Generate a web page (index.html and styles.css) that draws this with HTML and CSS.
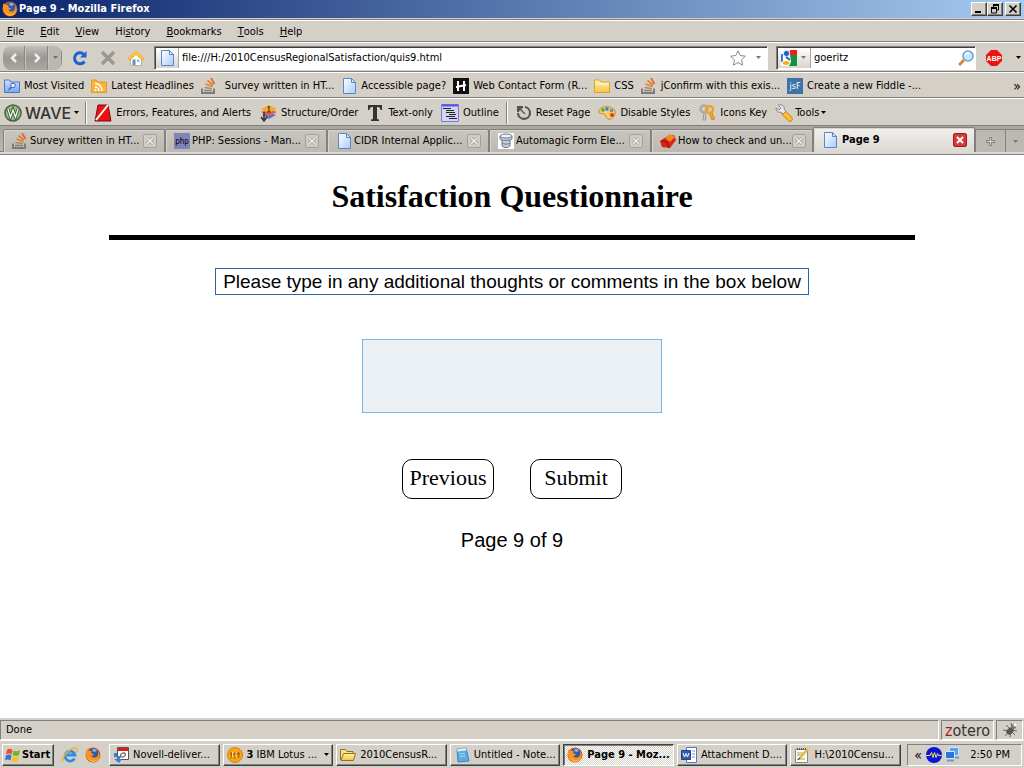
FILE: index.html
```html
<!DOCTYPE html>
<html lang="en">
	<head>
		<meta charset="UTF-8" />
		<meta name="viewport" content="width=device-width, initial-scale=1.0" />
		<title>Page 9 - Mozilla Firefox</title>
		<link rel="stylesheet" href="styles.css">
	</head>

	<body>
		<!-- Shared icons -->
		<svg class="icon-defs" aria-hidden="true">
			<defs>
				<linearGradient id="paper" x1="0" y1="0" x2="1" y2="1">
					<stop offset="0" stop-color="#fff" />
					<stop offset="1" stop-color="#a9cdfa" />
				</linearGradient>
				<linearGradient id="gold" x1="0" y1="0" x2="0" y2="1">
					<stop offset="0" stop-color="#fff3b0" />
					<stop offset="1" stop-color="#f5c540" />
				</linearGradient>
				<linearGradient id="bluefill" x1="0" y1="0" x2="0" y2="1">
					<stop offset="0" stop-color="#cfe0ff" />
					<stop offset="1" stop-color="#7aa5f0" />
				</linearGradient>
				<symbol id="page" viewBox="0 0 16 16">
					<path d="M2.500 .5h8l4 4v11h-12z" fill="url(#paper)" stroke="#5c86c4" />
					<path d="M10.500 .5v4h4z" fill="#dceaff" stroke="#5c86c4" />
				</symbol>
				<symbol id="stack" viewBox="0 0 16 16">
					<path d="M1 10.500v4.500h12v-4.500" fill="none" stroke="#7c7c7c" stroke-width="2" />
					<path d="M3 12.500h8" stroke="#8a8275" stroke-width="1.500" />
					<path d="M3.500 9.500l7.500 1" stroke="#b08a5a" stroke-width="1.500" />
					<path d="M4.500 6l7 2.500" stroke="#d9853a" stroke-width="1.700" />
					<path d="M6.500 2.500l5.500 4.500" stroke="#ee7a28" stroke-width="1.700" />
					<path d="M10 0l3.500 6" stroke="#e2642a" stroke-width="1.700" />
				</symbol>
				<symbol id="folder" viewBox="0 0 16 16">
					<path d="M.5 14.500v-12.500h5l1.500 2h8.500v10.500z" fill="url(#gold)" stroke="#d9a52e" />
					<path d="M1.500 6h13" stroke="#fffbe0" />
				</symbol>
				<symbol id="folder-open" viewBox="0 0 16 16">
					<path d="M.5 13v-10.500h5l1.500 2h6v3" fill="#fbe08a" stroke="#8f7420" />
					<path d="M1 13.500l2.500-7h12l-2 7z" fill="url(#gold)" stroke="#8f7420" />
				</symbol>
				<symbol id="firefox" viewBox="0 0 16 16">
					<circle cx="8" cy="8" r="7.500" fill="#d9541a" />
					<circle cx="8.500" cy="6.500" r="5" fill="#2d5ca8" />
					<path d="M7 2.500c2-1 4-.5 5 1l-2 1.500-2-.5z" fill="#7fb5e8" />
					<path d="M1.500 2.500c1 .3 1.500 1 2.500 1l3 1c-1 1-1 1.500 0 2.200l2 .3c-.5 2-2 1.500-2.500 2 1 2 4.500 2 6 0 1-1.500 1-3 .5-4.500 2.500 3 2 7-1 9-4 2.500-9 1-10.700-3.500C.5 7 .8 4.500 1.500 2.500z" fill="#f7931e" />
					<path d="M3 10c2 4.500 8 5 11 1-1 4-9 6-11-1z" fill="#ffce4a" />
				</symbol>
				<symbol id="tab-x" viewBox="0 0 14 14">
					<rect x=".5" y=".5" width="13" height="13" rx="1.500" fill="#d0cdc8" stroke="#a3a09b" />
					<path d="M4 4l6 6M10 4l-6 6" stroke="#999" stroke-width="3" />
					<path d="M4 4l6 6M10 4l-6 6" stroke="#f3f2f0" stroke-width="1.500" />
				</symbol>
				<symbol id="down" viewBox="0 0 5 3">
					<path d="M0 0h5L2.500 3z" fill="currentColor" />
				</symbol>
			</defs>
		</svg>

		<header class="title-bar">
			<svg class="icon"><use href="#firefox" /></svg>
			<span class="window-title">Page 9 - Mozilla Firefox</span>
			<button class="window-btn" aria-label="Minimize">
				<svg viewBox="0 0 12 10"><path d="M2 8h6" stroke="#000" stroke-width="2" /></svg>
			</button>
			<button class="window-btn" aria-label="Restore">
				<svg viewBox="0 0 12 10"><path d="M4 1h6M4.500 1v3M9.500 1v5h-2M2 4.500h6M2.500 4v5h5v-5" fill="none" stroke="#000" /><path d="M4 1h6M2 4h6" stroke="#000" stroke-width="2" /></svg>
			</button>
			<button class="window-btn window-close" aria-label="Close">
				<svg viewBox="0 0 12 10"><path d="M2.500 1.500l7 7M9.500 1.500l-7 7" stroke="#000" stroke-width="1.700" /></svg>
			</button>
		</header>

		<nav class="toolbar menu-bar">
			<button><u>F</u>ile</button>
			<button><u>E</u>dit</button>
			<button><u>V</u>iew</button>
			<button>Hi<u>s</u>tory</button>
			<button><u>B</u>ookmarks</button>
			<button><u>T</u>ools</button>
			<button><u>H</u>elp</button>
		</nav>

		<div class="toolbar nav-bar">
			<div class="history-btns">
				<button aria-label="Back">
					<svg class="icon" viewBox="0 0 16 16"><path d="M10 4L6 8l4 4" fill="none" stroke="#eee" stroke-width="2.500" /></svg>
				</button>
				<button aria-label="Forward">
					<svg class="icon" viewBox="0 0 16 16"><path d="M6 4l4 4-4 4" fill="none" stroke="#eee" stroke-width="2.500" /></svg>
				</button>
				<button class="history-more" aria-label="Recent pages"><svg class="arrow"><use href="#down" /></svg></button>
			</div>
			<div class="nav-btns">
				<button aria-label="Reload">
					<svg class="icon" viewBox="0 0 16 16"><path d="M12.500 11.500A5.500 5.500 0 1 1 11.500 4" fill="none" stroke="#1c62d0" stroke-width="3" /><path d="M8 7.500h6.500V1z" fill="#1c62d0" /></svg>
				</button>
				<button aria-label="Stop">
					<svg class="icon" viewBox="0 0 16 16"><path d="M2 2l12 12M14 2L2 14" stroke="#9a9893" stroke-width="3.500" /></svg>
				</button>
				<button aria-label="Home">
					<svg class="icon" viewBox="0 0 16 16"><path d="M2.500 8v7.500h11V8L8 3z" fill="#fff" stroke="#b9b3a5" /><path d="M.8 9.500L8 2.500l7.200 7" fill="none" stroke="#e89c00" stroke-width="3" /><path d="M1 9L8 2l7 7" fill="none" stroke="#ffd54a" stroke-width="1.500" /><path d="M4.500 9.500h3V15h-3z" fill="#5d90cc" /><path d="M9 9.500h2.500V12H9z" fill="#8fb6e0" /></svg>
				</button>
			</div>
			<div class="field url-field">
				<span class="field-cap"><svg class="icon"><use href="#page" /></svg></span>
				<input type="text" aria-label="Location" value="file:///H:/2010CensusRegionalSatisfaction/quis9.html">
				<svg class="icon" viewBox="0 0 16 16"><path d="M8 .8l2.200 4.700 5.200.7-3.800 3.600 1 5.300L8 12.500l-4.600 2.600 1-5.300L.6 6.200l5.200-.7z" fill="#fff" stroke="#8b8b8b" /></svg>
				<svg class="arrow field-arrow"><use href="#down" /></svg>
			</div>
			<div class="field search-field">
				<span class="field-cap search-cap">
					<svg class="icon" viewBox="0 0 16 16"><path d="M0 0h16v16H0z" fill="#fff" /><path d="M9 0h7v5H8z" fill="#ef1c1c" /><path d="M9 5h7v11H8l2-5z" fill="#15923c" /><path d="M0 4h2v8H0z" fill="#3d78d8" /><circle cx="5.500" cy="3.500" r="3.200" fill="#2a5fca" stroke="#fff" /><path d="M5 7l4 3" stroke="#2a5fca" stroke-width="2" /><ellipse cx="5" cy="13" rx="4" ry="2.500" fill="#f2ae13" stroke="#fff" /></svg>
					<svg class="arrow field-arrow"><use href="#down" /></svg>
				</span>
				<input type="text" aria-label="Search" value="goeritz">
				<svg class="icon" viewBox="0 0 16 16"><path d="M1 15l5-5" stroke="#d48a3a" stroke-width="3" /><circle cx="10" cy="6" r="5" fill="#c8e8ff" stroke="#6f9ccc" stroke-width="1.500" /><path d="M7 5a3 3 0 0 1 4-2" stroke="#fff" stroke-width="1.500" fill="none" /></svg>
			</div>
			<button class="abp-btn" aria-label="Adblock Plus">
				<svg class="icon" viewBox="0 0 16 16"><path d="M5 0h6l5 5v6l-5 5H5l-5-5V5z" fill="#ec1313" /><text class="abp-text" x="8" y="11" text-anchor="middle">ABP</text></svg>
				<svg class="arrow"><use href="#down" /></svg>
			</button>
		</div>

		<nav class="toolbar bookmarks-bar">
			<a href="#"><svg class="icon" viewBox="0 0 16 16"><path d="M.5 14.500v-12.500h5l1.500 2h8.500v10.500z" fill="url(#bluefill)" stroke="#4478c8" /><circle cx="9" cy="7.500" r="2.300" fill="#e6f0ff" stroke="#3868b8" /><path d="M7.500 9l-3 3" stroke="#3868b8" stroke-width="1.500" /></svg>Most Visited</a>
			<a href="#"><svg class="icon" viewBox="0 0 16 16"><path d="M.5 14.500v-12.500h5l1.500 2h8.500v10.500z" fill="#f8b53a" stroke="#e09a28" /><path d="M4 5.500a7 7 0 0 1 7 7.500M4 9a4 4 0 0 1 4 4" fill="none" stroke="#fff" stroke-width="1.500" /><circle cx="4.500" cy="12" r="1" fill="#fff" /></svg>Latest Headlines</a>
			<a href="#" class="wide-gap"><svg class="icon"><use href="#stack" /></svg>Survey written in HT...</a>
			<a href="#"><svg class="icon"><use href="#page" /></svg>Accessible page?</a>
			<a href="#"><svg class="icon" viewBox="0 0 16 16"><path d="M0 0h16v16H0z" fill="#111" /><path d="M5 3v10M11 3v10M3 9l10-2" stroke="#fff" stroke-width="2" /></svg>Web Contact Form (R...</a>
			<a href="#"><svg class="icon"><use href="#folder" /></svg>CSS</a>
			<a href="#"><svg class="icon"><use href="#stack" /></svg>jConfirm with this exis...</a>
			<a href="#"><svg class="icon" viewBox="0 0 16 16"><path d="M0 0h16v16H0z" fill="#3d73a6" /><text class="jsf-text" x="8" y="11" text-anchor="middle">jsF</text></svg>Create a new Fiddle -...</a>
			<button class="overflow-btn" aria-label="More bookmarks">»</button>
		</nav>

		<div class="toolbar wave-bar">
			<button class="wave-logo">
				<svg class="icon icon-large" viewBox="0 0 18 18"><circle cx="9" cy="9" r="8" fill="#92bd7e" stroke="#4c5c48" stroke-width="1.500" /><path d="M4 5l2.500 8L9 6l2.500 7L14 5" fill="none" stroke="#3d5a3c" stroke-width="3" /><path d="M4 5l2.500 8L9 6l2.500 7L14 5" fill="none" stroke="#fff" stroke-width="1.200" /></svg>
				<span class="wave-name">WAVE</span>
				<svg class="arrow"><use href="#down" /></svg>
			</button>
			<button><svg class="icon icon-large" viewBox="0 0 18 18"><path d="M4 1h10l3 16H1z" fill="#f01010" stroke="#701010" /><path d="M2 16L14 1" stroke="#fff" stroke-width="2" /></svg>Errors, Features, and Alerts</button>
			<button><svg class="icon icon-large" viewBox="0 0 18 18"><path d="M3 11l7-3 7 3-7 4z" fill="#5577dd" /><path d="M2 8l8-3 8 3-8 4z" fill="#e85c48" /><path d="M2 5l8-4 8 4-8 4z" fill="#f7a92e" /><path d="M10 2v6M8.500 3.500L10 2M8 8h4" stroke="#402000" fill="none" /><path d="M5 8v8M2 13l3 4 3-4" fill="none" stroke="#333" stroke-width="1.500" /></svg>Structure/Order</button>
			<button><svg class="icon icon-large" viewBox="0 0 18 18"><path d="M2 1h14v5h-1.500c0-2-1-3-3-3h-.5v11c0 1 1 1.500 2 1.500V17H5v-1.500c1 0 2-.5 2-1.500V3h-.5c-2 0-3 1-3 3H2z" fill="#333" /></svg>Text-only</button>
			<button><svg class="icon icon-large" viewBox="0 0 18 18"><path d="M.5.5h17v17H.5z" fill="#d5d5ef" stroke="#7777e8" /><path d="M1 1.500h16" stroke="#5555dd" stroke-width="2" /><path d="M2 4.500h8M5 6.500h8M5 8.500h9M8 10.500h7M5 12.500h9M8 14.500h8" stroke="#222" /></svg>Outline</button>
			<button class="wave-divided"><svg class="icon" viewBox="0 0 16 16"><path d="M9 2a6 6 0 1 1-7 6" fill="none" stroke="#555" stroke-width="2.200" /><path d="M1 1h6v1.500L2.500 7H1z" fill="#555" /><path d="M9 9L4 4" stroke="#666" stroke-width="1.700" /></svg>Reset Page</button>
			<button><svg class="icon icon-large" viewBox="0 0 18 18"><path d="M1 7c1-4 7-5 11-4s6 4 5 7-4 6-7 5-1-4-4-5-6 0-5-3z" fill="#f8ce68" stroke="#c68a28" /><circle cx="5" cy="6" r="1.800" fill="#3cb050" /><circle cx="9" cy="5" r="1.800" fill="#367be0" /><circle cx="13.500" cy="6.500" r="1.800" fill="#5c8ce0" /><circle cx="14" cy="11" r="2" fill="#e83828" /></svg>Disable Styles</button>
			<button><svg class="icon icon-large" viewBox="0 0 18 18"><path d="M6 8l-1 8h2.500L8 8" fill="#ccc" stroke="#999" /><circle cx="6" cy="5" r="3.500" fill="none" stroke="#aaa" stroke-width="2.500" /><path d="M11 8l3 8 2.500-1-3-8" fill="#f3a92b" stroke="#d28a18" /><circle cx="11.500" cy="5.500" r="3.500" fill="none" stroke="#eba12a" stroke-width="2.500" /></svg>Icons Key</button>
			<button class="wave-tools"><svg class="icon icon-large" viewBox="0 0 18 18"><path d="M9 9l6 6" stroke="#d98912" stroke-width="5.500" stroke-linecap="round" /><path d="M9 9l6 6" stroke="#ffc03a" stroke-width="3.500" stroke-linecap="round" /><path d="M3 1l3 3-2 2-3-2c0 3 2 5 5 4l2 2 3-3-2-2c1-3-2-5-6-4z" fill="#e8e8ee" stroke="#888" /></svg>Tools<svg class="arrow"><use href="#down" /></svg></button>
		</div>

		<nav class="tab-strip">
			<div class="tab">
				<a href="#"><svg class="icon"><use href="#stack" /></svg>Survey written in HT...</a>
				<button aria-label="Close tab"><svg class="tab-x"><use href="#tab-x" /></svg></button>
			</div>
			<div class="tab">
				<a href="#"><svg class="icon" viewBox="0 0 16 16"><path d="M0 0h16v16H0z" fill="#8184bc" /><text class="php-text" x="8" y="11" text-anchor="middle">php</text></svg>PHP: Sessions - Man...</a>
				<button aria-label="Close tab"><svg class="tab-x"><use href="#tab-x" /></svg></button>
			</div>
			<div class="tab">
				<a href="#"><svg class="icon"><use href="#page" /></svg>CIDR Internal Applic...</a>
				<button aria-label="Close tab"><svg class="tab-x"><use href="#tab-x" /></svg></button>
			</div>
			<div class="tab">
				<a href="#"><svg class="icon" viewBox="0 0 16 16"><path d="M0 0h16v16H0z" fill="#fff" /><path d="M2 3v3c2 2 9 2 12 0V3M4 7v6c2 2 6 2 8 0V7" fill="#c6ced8" stroke="#66788c" /><ellipse cx="8" cy="3" rx="6" ry="2" fill="#edf1f5" stroke="#66788c" /><path d="M4 10c2 1.500 6 1.500 8 0" stroke="#66788c" fill="none" /></svg>Automagic Form Ele...</a>
				<button aria-label="Close tab"><svg class="tab-x"><use href="#tab-x" /></svg></button>
			</div>
			<div class="tab">
				<a href="#"><svg class="icon" viewBox="0 0 16 16"><path d="M0 8l6-4 8-2 2 5-6 8-8-1z" fill="#d92414" /><path d="M5 5l5-4 5 3-5 5z" fill="#f08a20" /><path d="M1 8l6 1 2 6" fill="none" stroke="#8a1208" /></svg>How to check and un...</a>
				<button aria-label="Close tab"><svg class="tab-x"><use href="#tab-x" /></svg></button>
			</div>
			<div class="tab tab-active">
				<a href="#"><svg class="icon"><use href="#page" /></svg>Page 9</a>
				<button aria-label="Close tab"><svg class="tab-x" viewBox="0 0 14 14"><rect x=".5" y=".5" width="13" height="13" rx="1.500" fill="#d63a3a" stroke="#9c1f1f" /><path d="M4 4l6 6M10 4l-6 6" stroke="#fff" stroke-width="2" /></svg></button>
			</div>
			<button class="tab-new" aria-label="New tab"><svg viewBox="0 0 9 9"><path d="M3 0h3v3h3v3H6v3H3V6H0V3h3z" fill="#888682" /><path d="M4 1h1v3h3v1H5v3H4V5H1V4h3z" fill="#d4d0c8" /></svg></button>
			<button class="tab-list" aria-label="List tabs"><svg class="arrow"><use href="#down" /></svg></button>
		</nav>

		<main class="content">
			<h1>Satisfaction Questionnaire</h1>
			<hr>
			<form class="survey">
				<label for="comments">Please type in any additional thoughts or comments in the box below</label>
				<textarea id="comments"></textarea>
				<div class="survey-btns">
					<button type="button">Previous</button>
					<button type="button">Submit</button>
				</div>
				<p>Page 9 of 9</p>
			</form>
		</main>

		<div class="status-bar">
			<span class="status-panel status-text">Done</span>
			<span class="status-panel zotero"><span class="zotero-z">z</span>otero</span>
			<span class="status-panel status-bug">
				<svg class="icon" viewBox="0 0 16 16"><path d="M1 8l5 1M3 14l4-4M8 15l1-5M4 3l4 4M9 1l1 5M15 9l-5-1M13 13l-4-4" stroke="#666" fill="none" /><ellipse cx="8" cy="9" rx="3" ry="4" fill="#555" transform="rotate(45 8 9)" /><circle cx="11.500" cy="4.500" r="2.500" fill="#777" /><circle cx="13" cy="3" r="1.500" fill="#fff" /></svg>
			</span>
		</div>

		<footer class="taskbar">
			<button class="start-btn">
				<svg class="icon" viewBox="0 0 16 16"><path d="M2 3c2-2 4-1 5.500 0l-1 4.500C5 6.500 3 6 1 7.500z" fill="#e8502a" /><path d="M8.500 3.500c2 1 4 1 6.500-.5l-1 5c-2 1.500-4 1-6.500 0z" fill="#6cb82c" /><path d="M1 8.500c2-1.500 4-1 5.500 0l-1 5c-2-1-4-1.500-5.500 0z" fill="#3c70d8" /><path d="M7.500 9c2 1 4 1.500 6.500 0l-1 5c-2 1.500-4 1-6.500 0z" fill="#f8c02c" /></svg>Start
			</button>
			<div class="quick-launch">
				<button aria-label="Internet Explorer"><svg class="icon" viewBox="0 0 16 16"><path d="M12.500 11.500A5 5 0 1 1 13 8H5" fill="none" stroke="#2e8ddd" stroke-width="2.800" /><path d="M1 14C-1 11 8 0 14 1c2 .5 1 3 0 4" fill="none" stroke="#e7b52e" stroke-width="1.500" /></svg></button>
				<button aria-label="Mozilla Firefox"><svg class="icon"><use href="#firefox" /></svg></button>
			</div>
			<div class="task-list">
				<button><svg class="icon" viewBox="0 0 16 16"><path d="M4.500 .5h11v12h-11z" fill="#fff" stroke="#555" /><path d="M5 1h10v3H5z" fill="#e41b1b" /><path d="M1 6v4h4l-1 2h-3l5 4 3-4H7l1-3H4V6z" fill="#3c80d0" /><ellipse cx="10" cy="8" rx="2.500" ry="1.800" fill="none" stroke="#555" transform="rotate(-30 10 8)" /></svg><span>Novell-deliver...</span></button>
				<button><svg class="icon" viewBox="0 0 16 16"><circle cx="8" cy="8" r="7.500" fill="#f5a51c" stroke="#d88206" /><path d="M4.500 5v6M8 5v7M11.500 5v6M3 7h10" stroke="#b86404" stroke-width="1.500" fill="none" /><path d="M5.500 5v5M9 5v6" stroke="#ffe08a" /></svg><span><b>3</b> IBM Lotus ...</span><svg class="arrow"><use href="#down" /></svg></button>
				<button><svg class="icon"><use href="#folder-open" /></svg><span>2010CensusR...</span></button>
				<button><svg class="icon" viewBox="0 0 16 16"><path d="M3 2l9-1 3 13-11 1z" fill="#58aee0" stroke="#3c86b8" /><path d="M3 2l9-1 .5 2.500-9 1z" fill="#d9edf6" /><path d="M5 7l6-.5M5.500 9.500l6-.5" stroke="#a3d8f4" /></svg><span>Untitled - Note...</span></button>
				<button class="task-active"><svg class="icon"><use href="#firefox" /></svg><span>Page 9 - Moz...</span></button>
				<button><svg class="icon" viewBox="0 0 16 16"><path d="M5.500.5h10v15h-10z" fill="#fff" stroke="#5478b8" /><path d="M11 4h3M11 7h3M11 10h3" stroke="#7898cc" /><path d="M.5 3.500h9v9h-9z" fill="#2f5fb4" stroke="#1e4284" /><path d="M2 6l1.500 4L5 6.500 6.500 10 8 6" fill="none" stroke="#fff" /></svg><span>Attachment D....</span></button>
				<button><svg class="icon" viewBox="0 0 16 16"><path d="M1.500 2.500h12v13h-12z" fill="#fbfbf4" stroke="#888" /><path d="M3 2h9" stroke="#555" stroke-dasharray="1 1" stroke-width="2" /><path d="M3 6h7M3 8h5M3 12h8" stroke="#7ab080" /><path d="M5 12L14 2" stroke="#f0b92c" stroke-width="2.500" /><path d="M4 13l2-2" stroke="#333" /></svg><span>H:\2010Censu...</span></button>
			</div>
			<div class="tray">
				<button aria-label="Show hidden icons">«</button>
				<svg class="icon" viewBox="0 0 16 16"><circle cx="8" cy="8" r="8" fill="#0b14d8" /><path d="M0 8.500h4l1.500-3 1.500 5 1.500-5 1.500 5 1.500-4 1 2h3" fill="none" stroke="#f4ec4c" /></svg>
				<svg class="icon" viewBox="0 0 16 16"><path d="M5.500 .5h9v8h-9z" fill="#5ba0f0" stroke="#d6e4f8" /><path d="M1.500 4.500h9v7h-9z" fill="#2c74dc" stroke="#d6e4f8" /><path d="M3 13.500h7M11 10.500h4" stroke="#7c94b8" stroke-width="2" /></svg>
				<time>2:50 PM</time>
			</div>
		</footer>
	</body>
</html>
```
FILE: styles.css
```css
:root {
	--face: #d4d0c8;
	--shadow: #808080;
	--light: #fff;
	--ui-font: "DejaVu Sans Condensed", "DejaVu Sans", sans-serif;
}

* {
	box-sizing: border-box;
}

body {
	margin: 0;
	min-height: 100vh;
	display: flex;
	flex-direction: column;
	background-color: var(--face);
	color: #000;
	font-family: var(--ui-font);
	font-size: 11px;
	line-height: 14px;
	white-space: nowrap;
}

button {
	display: flex;
	align-items: center;
	gap: 4px;
	padding: 0;
	border: 0;
	background: none;
	color: inherit;
	font: inherit;
	white-space: nowrap;
}

a {
	display: flex;
	align-items: center;
	gap: 4px;
	color: inherit;
	text-decoration: none;
}

.icon-defs {
	position: absolute;
	width: 0;
	height: 0;
}

.icon {
	width: 16px;
	height: 16px;
	flex: none;
}

.icon-large {
	width: 18px;
	height: 18px;
}

.arrow {
	width: 5px;
	height: 3px;
	flex: none;
}

/* Title bar */
.title-bar {
	display: flex;
	align-items: center;
	height: 19px;
	padding: 0 3px 0 2px;
	border-bottom: 1px solid var(--face);
	background: linear-gradient(to right, #0a246a, #a6caf0);
	color: #fff;
	font-weight: bold;
}

.window-title {
	flex: 1;
	padding-left: 1px;
}

.window-btn {
	width: 16px;
	height: 14px;
	justify-content: center;
	background-color: var(--face);
	border: 1px solid;
	border-color: #fff #404040 #404040 #fff;
	box-shadow: inset -1px -1px var(--shadow);
}

.window-btn svg {
	width: 12px;
	height: 10px;
}

.window-close {
	margin-left: 2px;
}

/* Toolbars */
.toolbar {
	display: flex;
	align-items: center;
	border-top: 1px solid var(--light);
	border-bottom: 1px solid var(--shadow);
}

.menu-bar {
	height: 23px;
	padding: 2px 7px 0;
	gap: 16px;
	border-top-color: var(--shadow);
	box-shadow: inset 0 1px var(--light);
}

.menu-bar button {
	gap: 0;
}

.nav-bar {
	height: 30px;
	padding: 1px 3px 0;
}

.history-btns {
	display: flex;
	height: 24px;
	border-radius: 8px;
	overflow: hidden;
	background: linear-gradient(#c2bfb9, #999792 50%, #aaa8a2);
}

.history-btns button {
	width: 23px;
	justify-content: center;
	border-right: 1px solid #c8c5be;
	box-shadow: inset -1px 0 #8b8984;
}

.history-btns .history-more {
	width: 13px;
	border: 0;
	background-color: #bbb8b1;
	color: #707070;
}

.nav-btns {
	display: flex;
	gap: 12px;
	margin: 0 10px;
}

.field {
	display: flex;
	align-items: center;
	height: 24px;
	background-color: #fff;
	border: 1px solid;
	border-color: var(--shadow) #fff #fff var(--shadow);
	box-shadow: inset 1px 1px #404040;
	padding: 1px;
}

.url-field {
	flex: 1;
	margin-right: 8px;
}

.search-field {
	width: 200px;
	margin-right: 10px;
}

.field input {
	flex: 1;
	min-width: 0;
	padding: 0 3px;
	border: 0;
	outline: 0;
	background: none;
	font: inherit;
}

.field-cap {
	display: flex;
	align-items: center;
	gap: 4px;
	height: 20px;
	padding: 0 3px;
	background: linear-gradient(#fff, #d8d5ce);
	border-right: 1px solid #a9a69f;
}

.search-cap {
	padding: 0 4px 0 3px;
}

.field-arrow {
	color: #777;
}

.url-field .field-arrow {
	margin: 0 5px 0 10px;
}

.abp-btn {
	gap: 14px;
}

.abp-text {
	fill: #fff;
	font: bold 7px "Liberation Sans", sans-serif;
}

.bookmarks-bar {
	height: 26px;
	padding: 1px 3px 0 4px;
	gap: 7px;
}

.bookmarks-bar .wide-gap {
	gap: 8px;
}

.jsf-text {
	fill: #fff;
	font: 9px "DejaVu Sans Condensed", sans-serif;
}

.overflow-btn {
	margin-left: auto;
	font-size: 14px;
}

.wave-bar {
	height: 28px;
	padding: 1px 4px 0;
	gap: 8px;
}

.wave-logo {
	gap: 3px;
	height: 22px;
	padding-right: 6px;
	border-right: 1px solid var(--shadow);
	box-shadow: 1px 0 #fff;
}

.wave-name {
	color: #333;
	font: 500 16px "Inter", "Liberation Sans", sans-serif;
}

.wave-divided {
	height: 22px;
	padding-left: 8px;
	border-left: 1px solid #fff;
	box-shadow: -1px 0 var(--shadow);
}

.wave-tools {
	gap: 2px;
}

/* Tabs */
.tab-strip {
	display: flex;
	align-items: flex-end;
	height: 29px;
	padding: 0 0 3px 3px;
	background: linear-gradient(to bottom, #a9a6a0, #b9b6b0 25px, var(--shadow) 25px, var(--shadow) 26px, #e3e1dc 26px, var(--face) 28px, var(--shadow) 28px);
}

.tab {
	display: flex;
	align-items: center;
	justify-content: space-between;
	flex: 0 1 162px;
	min-width: 0;
	height: 23px;
	padding: 0 7px 0 8px;
	border: 1px solid var(--shadow);
	border-bottom: 0;
	border-radius: 2px 2px 0 0;
	background: linear-gradient(#c9c6c0, #bcb9b3);
	box-shadow: inset 1px 1px #d8d5cf;
}

.tab a {
	gap: 2px;
}

.tab-active {
	height: 25px;
	background: linear-gradient(#f1f0ee, #dbd8d2);
	font-weight: bold;
}

.tab-active a {
	gap: 4px;
}

.tab-x {
	width: 14px;
	height: 14px;
}

.php-text {
	fill: #000;
	font: 8px "DejaVu Sans Condensed", sans-serif;
}

.tab-new,
.tab-list {
	height: 23px;
	justify-content: center;
	border: 1px solid var(--shadow);
	border-bottom: 0;
	background-color: #bcb9b3;
	color: #777;
}

.tab-new {
	width: 31px;
}

.tab-new svg {
	width: 9px;
	height: 9px;
}

.tab-list {
	flex: 1;
	border-left: 0;
	border-right: 0;
}

/* Survey page */
.content {
	flex: 1;
	padding: 0 8px;
	background-color: #fff;
	font-family: "Liberation Sans", Arial, sans-serif;
	text-align: center;
}

.content h1 {
	margin: 22px 0 20px;
	font: bold 32px/38px "Liberation Serif", "Times New Roman", serif;
}

.content hr {
	width: 80%;
	height: 5px;
	margin: 0 auto;
	border: 0;
	background-color: #000;
}

.survey {
	display: flex;
	flex-direction: column;
	align-items: center;
	padding-top: 28px;
}

.survey label {
	padding: 1px 7px;
	border: 1px solid #2868a8;
	font-size: 19px;
	line-height: 23px;
}

.survey textarea {
	width: 300px;
	height: 74px;
	margin: 44px 0 46px;
	border: 1px solid #7eb4e2;
	background-color: #ebf1f5;
	resize: none;
}

.survey-btns {
	display: flex;
	gap: 36px;
}

.survey-btns button {
	width: 92px;
	height: 40px;
	padding-bottom: 2px;
	justify-content: center;
	border: 1px solid #000;
	border-radius: 10px;
	background-color: #fff;
	font: 22px "Liberation Serif", "Times New Roman", serif;
}

.survey p {
	margin: 29px 0 0;
	font-size: 20px;
	line-height: 24px;
}

/* Status bar */
.status-bar {
	display: flex;
	gap: 2px;
	height: 22px;
	padding: 2px 1px 0 0;
}

.status-panel {
	display: flex;
	align-items: center;
	justify-content: center;
	height: 20px;
	border: 1px solid;
	border-color: var(--shadow) #fff #fff var(--shadow);
}

.status-text {
	flex: 1;
	justify-content: flex-start;
	padding-left: 5px;
}

.zotero {
	width: 53px;
	color: #333;
	font: 16px "DejaVu Sans Condensed", sans-serif;
}

.zotero-z {
	color: #a01c1c;
}

.status-bug {
	width: 27px;
}

/* Taskbar */
.taskbar {
	display: flex;
	align-items: center;
	height: 28px;
	padding: 0 2px;
	border-top: 1px solid #fff;
}

.start-btn,
.task-list button {
	height: 22px;
	background-color: var(--face);
	border: 1px solid;
	border-color: #fff #404040 #404040 #fff;
	box-shadow: inset -1px -1px var(--shadow);
}

.start-btn {
	gap: 1px;
	width: 52px;
	padding-left: 2px;
	font-weight: bold;
}

.quick-launch {
	display: flex;
	gap: 7px;
	margin: 0 8px;
}

.task-list {
	display: flex;
	flex: 1;
	gap: 3px;
}

.task-list button {
	flex: 1 1 0;
	min-width: 0;
	max-width: 111px;
	padding: 0 3px;
}

.task-list span {
	flex: 1;
	text-align: left;
	overflow: hidden;
}

.task-list .task-active {
	border-color: #404040 #fff #fff #404040;
	box-shadow: inset 1px 1px var(--shadow);
	background: repeating-conic-gradient(#fff 0 25%, var(--face) 0 50%) 0 0 / 2px 2px;
	font-weight: bold;
}

.tray {
	display: flex;
	align-items: center;
	gap: 2px;
	height: 22px;
	width: 115px;
	margin-left: 6px;
	padding: 0 4px;
	border: 1px solid;
	border-color: var(--shadow) #fff #fff var(--shadow);
}

.tray button {
	width: 12px;
	justify-content: center;
	font-size: 14px;
}

.tray time {
	margin-left: auto;
	padding-right: 7px;
}
```
